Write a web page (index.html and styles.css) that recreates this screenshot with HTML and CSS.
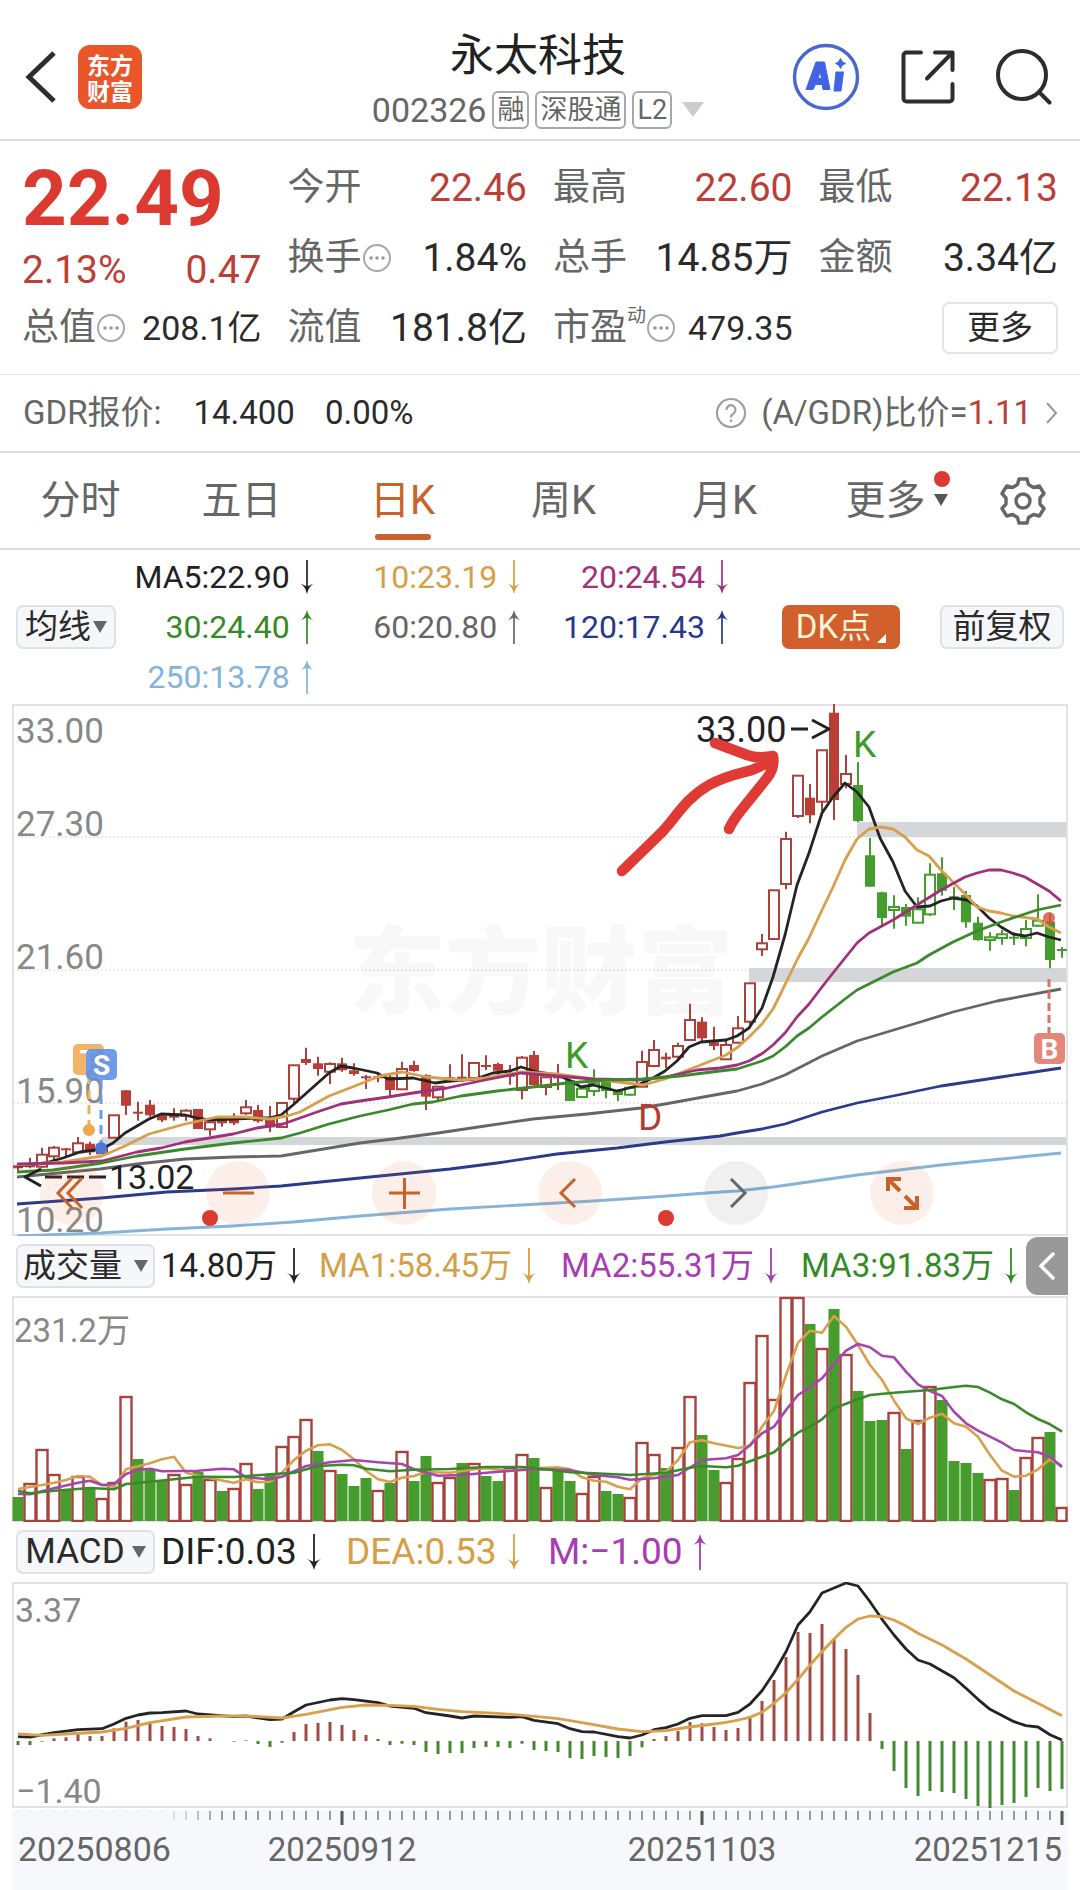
FILE: index.html
```html
<!DOCTYPE html>
<html lang="zh-CN">
<head>
<meta charset="utf-8">
<meta name="viewport" content="width=device-width, initial-scale=1">
<title>永太科技 002326</title>
<link rel="stylesheet" href="styles.css">
</head>
<body>
<svg class="defs" width="0" height="0" aria-hidden="true">
  <symbol id="i-down" viewBox="0 0 14 36"><path d="M7 0v32" fill="none" stroke="currentColor" stroke-width="1.8"/><path d="M0 25q5 3 7 11q2-8 7-11l-7 3z" fill="currentColor"/></symbol>
  <symbol id="i-up" viewBox="0 0 14 36"><path d="M7 36V4" fill="none" stroke="currentColor" stroke-width="1.8"/><path d="M0 11q5-3 7-11q2 8 7 11l-7-3z" fill="currentColor"/></symbol>
  <symbol id="i-info" viewBox="0 0 30 30"><circle cx="15" cy="15" r="13" fill="none" stroke="#a8a8a8" stroke-width="2"/><circle cx="9" cy="15" r="1.8" fill="#999"/><circle cx="15" cy="15" r="1.8" fill="#999"/><circle cx="21" cy="15" r="1.8" fill="#999"/></symbol>
</svg>

<header class="topbar">
  <div class="topbar-left">
    <button class="icon-btn" aria-label="返回"><svg width="34" height="54" viewBox="0 0 34 54"><path d="M30 3L5 27l25 24" fill="none" stroke="#2d2d2d" stroke-width="5"/></svg></button>
    <a class="logo" href="#"><span>东方</span><span>财富</span></a>
  </div>
  <div class="title">
    <h1>永太科技</h1>
    <div class="subtitle">
      <span class="code">002326</span>
      <span class="badge">融</span><span class="badge">深股通</span><span class="badge">L2</span>
      <svg class="caret" width="22" height="16" viewBox="0 0 22 16"><path d="M0 0h22L11 15z" fill="#ccc"/></svg>
    </div>
  </div>
  <div class="topbar-right">
    <button class="icon-btn" aria-label="AI">
      <svg width="68" height="68" viewBox="0 0 68 68"><circle cx="34" cy="34" r="31.5" fill="none" stroke="#4a67cf" stroke-width="3.4"/><path fill="#4163e6" fill-rule="evenodd" stroke="#4163e6" stroke-width="1" stroke-linejoin="round" d="M24 19h8.500l5.500 27.500h-7l-.800-5h-6.700l-2.500 5h-7zM26 35.500h3.300l-1-7.500zM44 29h7.500l-2.500 19h-7zM48.500 15.500q1 4 5 5q-4 1-5 5q-1-4-5-5q4-1 5-5z"/></svg>
    </button>
    <button class="icon-btn" aria-label="分享">
      <svg width="54" height="54" viewBox="0 0 54 54" fill="none" stroke="#2d2d2d" stroke-width="4" stroke-linecap="round" stroke-linejoin="round"><path d="M20 2.500H5.500a3 3 0 0 0-3 3v43a3 3 0 0 0 3 3h43a3 3 0 0 0 3-3V34M34 2.500h17.500V20M51 3L26 28.500"/></svg>
    </button>
    <button class="icon-btn" aria-label="搜索">
      <svg width="56" height="56" viewBox="0 0 56 56" fill="none" stroke="#2d2d2d" stroke-width="4" stroke-linecap="round"><circle cx="26" cy="26" r="24"/><path d="M43 43l10.500 10.500"/></svg>
    </button>
  </div>
</header>

<section class="quote">
  <div class="price-block">
    <div class="price">22.49</div>
    <div class="change"><span>2.13%</span><span>0.47</span></div>
  </div>
  <div class="cell"><span>今开</span><b class="red">22.46</b></div>
  <div class="cell"><span>最高</span><b class="red">22.60</b></div>
  <div class="cell"><span>最低</span><b class="red">22.13</b></div>
  <div class="cell"><span>换手<svg class="info"><use href="#i-info"/></svg></span><b>1.84%</b></div>
  <div class="cell"><span>总手</span><b>14.85万</b></div>
  <div class="cell"><span>金额</span><b>3.34亿</b></div>
  <div class="cell"><span>总值<svg class="info"><use href="#i-info"/></svg></span><b class="small">208.1亿</b></div>
  <div class="cell"><span>流值</span><b>181.8亿</b></div>
  <div class="cell"><span>市盈<sup>动</sup><svg class="info"><use href="#i-info"/></svg></span><b class="small">479.35</b></div>
  <div class="cell end"><button class="more-btn">更多</button></div>
</section>

<a class="gdr" href="#">
  <span>GDR报价:</span><span class="dark first">14.400</span><span class="dark second">0.00%</span>
  <span class="ratio">
    <svg width="32" height="32" viewBox="0 0 32 32" fill="none" stroke="#a0a0a0" stroke-width="2.200"><circle cx="16" cy="16" r="14"/><path d="M11.500 13a4.500 4.500 0 1 1 7 3.500c-2 1.200-2.500 2-2.500 4M16 22.500v2.500"/></svg>
    <span>(A/GDR)比价=<em>1.11</em></span>
    <svg width="12" height="22" viewBox="0 0 12 22" fill="none" stroke="#999" stroke-width="2"><path d="M1 1l9 10-9 10"/></svg>
  </span>
</a>

<nav class="tabs">
  <button class="tab">分时</button>
  <button class="tab">五日</button>
  <button class="tab active">日K</button>
  <button class="tab">周K</button>
  <button class="tab">月K</button>
  <button class="tab"><span class="with-dot">更多<i class="dot"></i><svg class="tri" width="14" height="12" viewBox="0 0 14 12"><path d="M0 0h14L7 12z" fill="#555"/></svg></span></button>
  <button class="tab gear" aria-label="设置">
    <svg width="48" height="48" viewBox="0 0 48 48" fill="none" stroke="#666" stroke-width="3.400" stroke-linejoin="round"><path d="M20 2h8l1.500 5.500 5 3 5.800-1.500 4.700 7.500-4 4.500v6l4 4.500-4.700 7.500-5.800-1.500-5 3L28 46h-8l-1.500-5.500-5-3L7.700 39 3 31.500 7 27v-6l-4-4.500L7.700 9l5.800 1.500 5-3z"/><circle cx="24" cy="24" r="7"/></svg>
  </button>
</nav>

<section class="ma">
  <button class="chip ma-chip">均线<svg width="14" height="14" viewBox="0 0 14 14"><path d="M0 1h14L7 13z" fill="#666"/></svg></button>
  <div class="ma-grid">
    <span class="c-black">MA5:22.90<svg class="arrow"><use href="#i-down"/></svg></span>
    <span class="c-gold">10:23.19<svg class="arrow"><use href="#i-down"/></svg></span>
    <span class="c-magenta">20:24.54<svg class="arrow"><use href="#i-down"/></svg></span>
    <span class="c-green">30:24.40<svg class="arrow"><use href="#i-up"/></svg></span>
    <span class="c-gray">60:20.80<svg class="arrow"><use href="#i-up"/></svg></span>
    <span class="c-navy">120:17.43<svg class="arrow"><use href="#i-up"/></svg></span>
    <span class="c-sky">250:13.78<svg class="arrow"><use href="#i-up"/></svg></span>
  </div>
  <button class="chip dk">DK点<svg width="9" height="9" viewBox="0 0 9 9"><path d="M9 0v9H0z" fill="#fff"/></svg></button>
  <button class="chip fq">前复权</button>
</section>

<section class="chart">
  <svg id="kline" viewBox="12 704 1056 532" role="img" aria-label="日K线"></svg>
  <div class="chart-tools">
    <button aria-label="最早"><svg viewBox="0 0 64 64"><path d="M32 17L18 32l14 15M42 17L28 32l14 15"/></svg></button>
    <button aria-label="缩小"><svg viewBox="0 0 64 64"><path d="M17 32h31"/></svg></button>
    <button aria-label="放大"><svg viewBox="0 0 64 64"><path d="M17 32h31M32.500 17v31"/></svg></button>
    <button aria-label="左移"><svg viewBox="0 0 64 64"><path d="M37 18L23 32l14 14"/></svg></button>
    <button class="off" aria-label="右移"><svg viewBox="0 0 64 64"><path d="M27 18l14 14-14 14"/></svg></button>
    <button class="full" aria-label="全屏"><svg viewBox="0 0 64 64"><path d="M18 30V18h13M18 18l12 12M47 35v12H34M47 47L35 35"/></svg></button>
  </div>
</section>

<section class="legend vol">
  <button class="chip sel">成交量<svg width="14" height="12" viewBox="0 0 14 12"><path d="M0 0h14L7 12z" fill="#666"/></svg></button>
  <div class="legend-items">
    <span class="c-black">14.80万<svg class="arrow"><use href="#i-down"/></svg></span>
    <span class="c-gold">MA1:58.45万<svg class="arrow"><use href="#i-down"/></svg></span>
    <span class="c-purple">MA2:55.31万<svg class="arrow"><use href="#i-down"/></svg></span>
    <span class="c-green">MA3:91.83万<svg class="arrow"><use href="#i-down"/></svg></span>
  </div>
  <button class="drawer" aria-label="展开"><svg width="18" height="28" viewBox="0 0 18 28"><path d="M15 2L3 14l12 12" fill="none" stroke="#fff" stroke-width="3.500" stroke-linecap="round"/></svg></button>
</section>
<section class="chart"><svg id="volume" viewBox="12 1296 1056 226" role="img" aria-label="成交量"></svg></section>

<section class="legend macd">
  <button class="chip sel">MACD<svg width="14" height="12" viewBox="0 0 14 12"><path d="M0 0h14L7 12z" fill="#666"/></svg></button>
  <div class="legend-items">
    <span class="c-black">DIF:0.03<svg class="arrow"><use href="#i-down"/></svg></span>
    <span class="c-gold">DEA:0.53<svg class="arrow"><use href="#i-down"/></svg></span>
    <span class="c-purple">M:−1.00<svg class="arrow"><use href="#i-up"/></svg></span>
  </div>
</section>
<section class="chart"><svg id="macd" viewBox="12 1582 1056 226" role="img" aria-label="MACD"></svg></section>
<section class="chart axis"><svg id="axis" viewBox="12 1810 1056 80" role="img" aria-label="日期"></svg></section>

<script src="charts.js"></script>
</body>
</html>
```
FILE: styles.css
```css
* { box-sizing: border-box; }
body { margin: 0; background: #fff; color: #2b2b2b; font-family: Roboto, "Noto Sans CJK SC", sans-serif; line-height: 1.2; }
button { margin: 0; padding: 0; border: 0; background: none; font: inherit; color: inherit; cursor: pointer; }
a { color: inherit; text-decoration: none; }
svg { display: block; flex: none; }
.defs { position: absolute; }

.topbar { display: grid; grid-template-columns: 1fr auto 1fr; height: 141px; padding: 24px 28px 0 24px; border-bottom: 2px solid #dcdcdc; }
.topbar-left, .topbar-right { display: flex; align-items: center; height: 106px; }
.topbar-left { gap: 20px; }
.topbar-right { justify-content: flex-end; gap: 41px; }
.logo { display: flex; flex-direction: column; justify-content: center; align-items: center; width: 64px; height: 64px; border-radius: 12px; background: #e8562a; color: #fff; font: 700 23px/26px "Noto Sans CJK SC", sans-serif; }
.title { text-align: center; }
h1 { margin: 0; font-size: 44px; line-height: 64px; font-weight: 400; color: #222; }
.subtitle { display: flex; align-items: center; gap: 6px; height: 44px; color: #666; }
.code { font-size: 34px; }
.badge { height: 38px; padding: 0 3px; border: 2px solid #a8a8a8; border-radius: 6px; font-size: 27px; line-height: 34px; }
.caret { margin-left: 4px; }

.quote { display: grid; grid-template-columns: repeat(4, minmax(0, 1fr)); grid-auto-rows: 70px; column-gap: 26px; padding: 12px 22px 11px; border-bottom: 1px solid #e6e6e6; }
.price-block { grid-row: span 2; color: #b93f38; }
.price { font-size: 78px; line-height: 92px; font-weight: 700; color: #dc3a30; }
.change { display: flex; justify-content: space-between; font-size: 39px; line-height: 50px; }
.cell { display: flex; align-items: center; justify-content: space-between; font-size: 39px; white-space: nowrap; }
.cell > span { display: flex; align-items: center; font-size: 37px; color: #666; }
.cell b { font-weight: 400; }
.cell b.small { font-size: 34px; }
.cell .red { color: #b93f38; }
.cell sup { align-self: flex-start; font-size: 19px; line-height: 20px; }
.cell.end { justify-content: flex-end; }
.info { width: 30px; height: 30px; }
.more-btn { width: 116px; height: 52px; border: 2px solid #e4e4e4; border-radius: 7px; font-size: 33px; }

.gdr { display: flex; align-items: center; height: 78px; padding: 0 22px 0 23px; border-bottom: 2px solid #dcdcdc; color: #666; font-size: 33px; }
.gdr .dark { color: #2b2b2b; }
.gdr .first { margin-left: 32px; }
.gdr .second { margin-left: 30px; }
.ratio { display: flex; align-items: center; gap: 14px; margin-left: auto; }
.ratio em { font-style: normal; color: #b93f38; }

.tabs { display: grid; grid-template-columns: repeat(6, 161fr) 114fr; height: 97px; border-bottom: 2px solid #dcdcdc; }
.tab { display: flex; flex-direction: column; align-items: center; justify-content: center; font-size: 40px; color: #666; }
.tab.active { color: #c8622d; }
.tab.active::after { content: ""; width: 56px; height: 6px; margin: 9px 0 -15px; border-radius: 3px; background: #c8622d; }
.with-dot { position: relative; }
.dot { position: absolute; right: -24px; top: -6px; width: 16px; height: 16px; border-radius: 50%; background: #dc3a30; }
.tri { position: absolute; right: -22px; top: 17px; }

.ma { display: flex; align-items: center; height: 154px; padding: 0 16px; }
.chip { display: flex; align-items: center; justify-content: center; height: 44px; border: 2px solid #e0e1e4; border-radius: 7px; background: #f6f7fa; font-size: 33px; white-space: nowrap; }
.ma-chip { width: 100px; gap: 2px; }
.ma-grid { flex: 1; display: grid; grid-template-columns: 198fr 208fr 208fr; grid-auto-rows: 50px; font-size: 32px; }
.ma-grid span { display: flex; align-items: center; justify-content: flex-end; gap: 10px; }
.arrow { width: 14px; height: 34px; }
.dk { width: 118px; margin-left: 53px; border: 0; background: #d1602c; color: #fff4dc; gap: 6px; }
.dk svg { align-self: flex-end; margin-bottom: 6px; }
.fq { width: 124px; margin-left: 40px; }

.c-black { color: #222; }
.c-gold { color: #d69e45; }
.c-magenta { color: #a3307c; }
.c-green { color: #358a28; }
.c-gray { color: #666; }
.c-navy { color: #26388c; }
.c-sky { color: #82b4dc; }
.c-purple { color: #a83cb4; }

.chart { position: relative; margin: 0 12px; }
.chart > svg { width: 100%; height: auto; }
.chart text { font-family: Roboto, "Noto Sans CJK SC", sans-serif; }
.chart-tools { position: absolute; left: 28px; right: 134px; bottom: 11px; display: flex; justify-content: space-between; }
.chart-tools button { width: 64px; height: 64px; border-radius: 50%; background: rgba(225, 95, 35, .1); color: #c8622d; }
.chart-tools .off { background: rgba(90, 90, 90, .09); color: #666; }
.chart-tools path { fill: none; stroke: currentColor; stroke-width: 3; }
.chart-tools .full path { stroke-width: 4; }

.legend { display: flex; align-items: center; height: 60px; padding: 0 12px 0 16px; font-size: 33px; }
.sel { width: 139px; gap: 12px; }
.legend-items { flex: 1; display: grid; margin-left: 6px; }
.legend-items span { display: flex; align-items: center; gap: 10px; white-space: nowrap; }
.legend .arrow { height: 36px; }
.vol .legend-items { grid-template-columns: 158fr 242fr 240fr 225fr; }
.macd .legend-items { grid-template-columns: 185fr 202fr 520fr; font-size: 37px; }
.macd .sel { font-size: 35px; gap: 7px; }
.drawer { display: flex; align-items: center; justify-content: center; width: 42px; height: 58px; border-radius: 12px 0 0 12px; background: #999; }
.axis { margin-top: 2px; background: #f7f8fb; }
```
FILE: charts.js
```js
const RED = '#a8423c', FILL_RED = '#bb3d35', GREEN = '#469c2c';
const COLORS = { black: '#242424', gold: '#d8a04c', magenta: '#a0307a', green: '#3a8a2c', gray: '#666', navy: '#2a3a8c', sky: '#86b4d8', purple: '#a546ad' };
const xOf = i => 18 + 12 * i;

const line = (pts, color, w = 3) => `<polyline points="${pts}" fill="none" stroke="${color}" stroke-width="${w}" stroke-linejoin="round"/>`;
const rect = (x, y, w, h, fill, extra = '') => `<rect x="${x}" y="${y}" width="${w}" height="${h}" fill="${fill}" ${extra}/>`;
const text = (x, y, s, fill, size = 34, extra = '') => `<text x="${x}" y="${y}" fill="${fill}" font-size="${size}" ${extra}>${s}</text>`;
const seg = (x1, y1, x2, y2, color, w = 2, extra = '') => `<line x1="${x1}" y1="${y1}" x2="${x2}" y2="${y2}" stroke="${color}" stroke-width="${w}" ${extra}/>`;
const frame = (y, h) => rect(13, y + 1, 1054, h - 2, 'none', 'stroke="#e2e2e2" stroke-width="2"');

/* Candles: kind, high, body top, body bottom, low, in thirds of a unit below base.
   h/n hollow up bars, f/g filled down bars, c/k crosses (red / green). */
const candles = [
  [990, 'f 522 526 535 542|f 503 525 532 535|h 473 494 530 535|h 468 473 499 510|c 474 478 478 500|h 441 460 487 492|f 455 461 487 495|h 460 467 490 492|h 375 376 443 443|f 300 301 347 375|c 335 368 368 392|f 330 344 376 380|f 370 376 391 396|f 355 374 383 392|h 358 362 377 392|f 357 357 417 417|h 395 397 418 437|f 385 390 400 410|f 370 385 400 405|h 330 352 370 375|f 345 360 394 398|f 348 388 412 426|h 338 339 411 412|h 226 226 326 345|f 173 207 219 225|f 200 220 237 257|h 217 222 245 282|f 203 220 241 245|f 220 241 252 257|c 255 262 262 297|c 247 262 262 277|f 255 260 300 318|h 215 237 298 300|f 212 225 243 245|f 253 255 320 360|h 288 290 322 330|f 223 262 275 278|f 193 260 272 275|h 218 219 264 264|c 196 228 228 240|f 218 222 242 258|f 225 250 260 284|h 198 203 300 328|f 183 195 285 287|h 260 262 291 316|c 222 262 262 300|g 268 270 333 333|n 292 296 321 325|n 238 280 303 318|g 265 275 303 325|g 298 300 315 333|n 288 293 314 318|h 182 216 290 292|h 150 180 228 232|f 188 200 208 234|h 158 168 200 205|h 41 90 150 152|f 82 95 145 157|f 110 157 168 180'],
  [960, 'h 240 255 298 298|h 168 205 248 250|h 68 70 185 205'],
  [700, 'h 702 730 748 768|h 570 571 717 717|h 395 417 552 568|h 226 227 348 354|f 252 293 346 370|h 150 151 305 335|f 12 38 300 360|h 165 222 252 265|g 186 255 363 366|g 414 466 560 560|g 575 577 654 675|n 586 621 630 686|g 612 621 650 677|n 592 628 668 670|n 490 524 643 648|g 472 520 572 587|k 560 592 592 630|g 573 585 667 683|g 650 668 720 722|n 697 712 720 752|n 690 703 714 734|k 697 713 713 735|n 660 687 714 739|n 583 662 677 680|g 640 665 780 805|k 741 750 750 773']
].flatMap(([base, rows]) => rows.split('|').map(r => {
  const [kind, ...v] = r.split(' ');
  return [kind, ...v.map(n => +(base + n / 3).toFixed(1))];
}));

const drawCandle = ([kind, hi, top, bot, lo], i) => {
  const x = xOf(i), up = 'hfc'.includes(kind), col = up ? RED : GREEN;
  if (kind === 'c' || kind === 'k') return seg(x, hi, x, lo, col) + seg(x - 5, top, x + 5, top, col);
  if (kind === 'h' || kind === 'n')
    return seg(x, hi, x, top, col) + seg(x, bot, x, lo, col) + rect(x - 5, top, 10, Math.max(bot - top, 1), '#fff', `fill-opacity=".6" stroke="${col}" stroke-width="2"`);
  return seg(x, hi, x, lo, col) + rect(x - 5, top, 10, Math.max(bot - top, 2), up ? FILL_RED : GREEN);
};

const averages = {
  sky: '17,1236 101,1233 167,1229 233,1226 293,1222 360,1216 450,1209 521,1205 593,1201 653,1197 720,1192 737,1191 773,1187 822,1180 857,1175 941,1165 1001,1159 1061,1153',
  navy: '17,1204 101,1198 167,1192 233,1189 281,1186 360,1178 450,1169 497,1163 557,1154 617,1148 665,1142 720,1136 737,1133 762,1129 785,1124 822,1112 857,1103 893,1096 941,1086 1001,1077 1061,1068',
  gray: '17,1177 100,1169 137,1164 185,1159 233,1157 281,1156 360,1143 393,1139 438,1133 485,1126 533,1119 587,1114 641,1108 665,1104 720,1094 737,1091 762,1084 785,1075 822,1056 857,1041 917,1023 953,1012 997,1001 1061,989',
  black: '17,1166 45,1163 63,1158 80,1152 102,1149 113,1143 125,1133 137,1126 149,1119 161,1114 185,1115 197,1118 209,1120 233,1119 257,1118 269,1118 281,1115 293,1105 329,1073 341,1066 353,1068 363,1070 377,1073 388,1079 413,1078 435,1083 450,1081 475,1079 493,1073 510,1071 521,1067 537,1072 557,1075 569,1080 581,1087 593,1085 617,1091 633,1087 653,1078 665,1071 677,1061 689,1047 701,1042 726,1040 737,1036 749,1028 762,1008 773,977 785,935 797,885 809,853 822,813 833,797 845,783 857,792 869,807 880,838 893,862 905,891 917,907 930,906 941,901 953,898 967,900 977,906 989,918 1001,927 1013,934 1025,936 1037,933 1049,937 1061,940',
  gold: '17,1165 63,1162 102,1156 125,1146 149,1134 185,1124 217,1117 245,1117 270,1119 287,1116 300,1112 329,1096 360,1084 380,1076 402,1072 427,1077 460,1080 485,1078 521,1072 557,1074 593,1079 643,1085 665,1079 693,1068 726,1055 738,1047 749,1037 762,1024 773,1009 780,995 797,960 809,938 822,910 833,887 845,860 857,839 869,829 881,827 893,829 905,837 917,850 929,856 941,870 953,882 965,894 977,907 989,911 1001,913 1013,916 1037,919 1049,927 1061,933',
  magenta: '17,1164 63,1163 102,1161 137,1152 161,1148 185,1142 233,1134 257,1128 283,1124 317,1112 341,1104 360,1101 388,1097 413,1093 447,1088 485,1080 521,1073 557,1076 593,1079 637,1080 665,1077 697,1070 720,1068 737,1065 749,1061 763,1053 773,1045 785,1033 797,1017 809,1004 822,987 833,973 845,958 857,943 869,933 893,920 917,905 941,890 965,877 977,873 989,870 1001,870 1013,873 1025,877 1037,884 1049,891 1061,901',
  green: '17,1172 53,1170 102,1163 137,1156 185,1149 233,1143 281,1138 300,1133 329,1124 360,1116 388,1110 413,1104 433,1102 461,1096 497,1091 533,1087 567,1083 607,1080 643,1079 680,1076 720,1071 737,1069 762,1061 773,1056 785,1047 797,1036 809,1028 822,1017 845,999 857,990 881,978 893,972 917,963 929,955 953,942 977,931 1001,922 1025,914 1037,910 1061,905'
};

const marker = (x, y, fill, letter, opacity = .92) => rect(x, y, 31, 31, fill, `rx="5" fill-opacity="${opacity}"`) + text(x + 15.5, y + 26, letter, '#fff', 28, 'font-weight="700" text-anchor="middle"');

document.getElementById('kline').innerHTML =
  text(541, 1006, '东方财富', '#f8f8f8', 96, 'font-weight="900" text-anchor="middle"') +
  [837, 970, 1103].map(y => seg(13, y, 1067, y, '#d4d4d4', 1, 'stroke-dasharray="2 2"')).join('') +
  rect(857, 822, 210, 15, '#d5d6da') + rect(749, 968, 318, 14, '#d5d6da') + rect(101, 1137, 966, 8, '#d5d6da') +
  frame(704, 532) +
  [[743, '33.00'], [836, '27.30'], [969, '21.60'], [1103, '15.90'], [1232, '10.20']].map(([y, s]) => text(16, y, s, '#888', 35)).join('') +
  candles.map(drawCandle).join('') +
  Object.entries(averages).map(([k, p]) => line(p, COLORS[k], 2.8)).join('') +
  seg(89, 1075, 89, 1126, '#eab163', 3, 'stroke-dasharray="9 6"') + seg(101, 1080, 101, 1142, '#6b9ae8', 3, 'stroke-dasharray="9 6"') +
  '<circle cx="89" cy="1130" r="6" fill="#eda950"/><circle cx="101" cy="1148" r="6" fill="#4c78d8"/>' +
  marker(73, 1044, '#f0ae5c', 'T') + marker(86, 1049, '#5a8ee8', 'S', .88) +
  seg(1049, 979, 1049, 1034, '#d0766c', 3, 'stroke-dasharray="8 4"') + marker(1034, 1033, '#e27d70', 'B') +
  '<circle cx="1049" cy="918" r="6" fill="#dc4a3c" fill-opacity=".8"/>' +
  text(565, 1068, 'K', '#3f9a2a', 37) + text(853, 757, 'K', '#3f9a2a', 37) + text(638, 1130, 'D', '#b03c36', 37) +
  text(696, 742, '33.00', '#222', 36) + seg(791, 729, 808, 729, '#222', 3) + line('812,720 829,729 812,738', '#222') +
  text(109, 1189, '13.02', '#222', 34) + line('41,1169 25,1177 41,1186', '#222') + seg(45, 1177, 107, 1177, '#222', 3, 'stroke-dasharray="17 5"') +
  '<path d="M622 871L659 835C675 820 683 800 709 785C727 775 742 773 752 770L770 762M715 743L747 755Q757 759 773 756Q775 768 767 778L743 808Q733 820 729 829" fill="none" stroke="#e03a36" stroke-width="10.500" stroke-linecap="round" stroke-linejoin="round"/>' +
  '<circle cx="210" cy="1218" r="8" fill="#dc3a30"/><circle cx="666" cy="1218" r="8" fill="#dc3a30"/>';

/* Turns "index value" pairs into polyline points. */
const series = (s, base) => s.split(',').map(p => { const [i, v] = p.trim().split(' '); return `${xOf(+i)},${(base + v / 3).toFixed(1)}`; }).join(' ');

/* Volume bars: r up, g down. */
const volumes = 'g801 r758 r658 r732 g778 r738 g778 r803 r757 r497 g688 g718 g752 r732 r762 g727 r748 g782 r775 r698 g777 g732 r648 r617 r567 g663 r720 g732 g768 g744 r780 g758 r662 g753 g678 r757 r742 g700 r698 g738 g753 r712 r671 g685 r772 g722 g752 r788 r737 g782 g792 r800 r635 r671 g714 r650 r497 g616 g720 r757 r683 r455 r314 r507 r200 r200 g282 r353 g238 r372 g483 g574 g571 r547 g657 r569 r468 g510 g693 g699 g729 r748 r743 g780 r681 r622 g605 r831'.split(' ');

document.getElementById('volume').innerHTML =
  frame(1296, 226) +
  volumes.map((s, i) => {
    const y = Math.round(1230 + s.slice(1) / 3);
    return s[0] === 'g' ? rect(xOf(i) - 5.5, y, 11, 1521 - y, GREEN)
      : rect(xOf(i) - 5.5, y + 1, i === 87 ? 10 : 11, 1520 - y, '#fff', `stroke="${RED}" stroke-width="2.4"`);
  }).join('') +
  line(series('0 777,2 765,3 758,4 750,5 738,6 740,7 765,8 770,9 718,11 700,12 688,13 680,14 728,16 745,18 758,19 748,20 757,21 755,22 728,23 690,24 662,25 646,26 643,27 660,28 688,29 722,30 748,31 756,32 743,33 738,34 726,36 728,38 718,39 715,41 722,43 715,45 712,46 718,47 742,48 752,49 755,50 770,51 778,52 745,54 725,55 690,56 637,57 631,58 640,60 654,61 648,62 590,63 543,64 435,65 338,66 302,67 308,68 258,69 290,70 345,71 405,72 450,73 512,74 565,75 582,76 563,77 551,78 580,79 590,80 620,81 675,82 722,83 740,84 737,85 718,86 688,87 708', 1230), COLORS.gold, 2.6) +
  line(series('0 792,1 793,3 775,5 758,6 752,7 765,8 762,9 732,10 720,11 716,12 724,15 722,17 716,18 718,19 742,21 748,22 740,24 708,26 697,28 690,30 697,32 702,33 718,35 737,37 735,40 725,42 720,44 718,46 720,48 735,50 742,51 749,53 745,55 735,57 690,59 685,60 675,61 645,62 610,63 590,64 540,65 495,66 472,67 445,68 402,69 362,70 342,71 352,72 377,73 382,74 425,75 463,76 483,77 498,78 545,79 580,80 602,82 638,83 660,84 664,85 667,86 680,87 711', 1230), COLORS.purple, 2.6) +
  line(series('0 783,1 790,3 782,6 774,8 778,9 762,11 755,13 748,15 740,18 741,21 733,23 728,25 708,27 704,28 706,29 716,31 724,33 719,36 717,39 711,42 711,44 718,46 727,48 730,51 735,54 728,56 713,57 708,59 712,60 707,62 680,63 667,64 635,65 608,66 590,67 568,68 535,70 508,71 495,73 488,76 480,78 471,79 467,80 471,81 488,82 508,83 522,84 547,85 567,86 583,87 605', 1230), COLORS.green, 2.6) +
  text(14, 1342, '231.2万', '#888', 33);

/* MACD histogram ends; the zero level is 663. */
const hist = '675 675 665 655 652 643 648 648 625 605 600 607 618 621 627 648 655 663 665 661 672 681 668 636 612 609 606 615 630 645 657 675 671 675 696 702 699 699 684 681 681 684 671 690 693 696 714 717 708 711 714 708 682 657 648 633 606 610 621 630 624 588 543 480 411 336 339 312 358 387 465 579 687 753 804 828 813 816 819 837 858 864 855 849 831 804 813 807'.split(' ').map(Number);

document.getElementById('macd').innerHTML =
  frame(1582, 226) +
  hist.map((v, i) => seg(xOf(i), 1741, xOf(i), (1520 + v / 3).toFixed(1), v < 663 ? '#a04a42' : '#43882f', 3)).join('') +
  line(series('0 650,1 651,3 638,5 629,7 626,8 612,9 595,10 585,11 579,12 578,14 573,15 582,18 590,19 588,21 599,22 597,23 575,24 555,26 540,27 536,28 539,30 548,31 558,33 565,34 578,36 588,37 594,38 588,41 592,42 590,43 601,45 611,46 626,47 635,48 636,50 650,51 654,52 645,53 629,54 623,55 612,56 595,57 587,59 587,60 577,61 552,62 512,63 458,64 395,65 315,66 275,67 219,68 204,69 189,70 198,71 245,72 298,73 345,74 387,75 420,76 432,78 473,79 505,80 538,81 568,83 605,84 617,85 621,86 644,87 660', 1520), COLORS.black, 2.8) +
  line(series('0 642,2 646,4 642,7 636,9 625,11 608,14 591,17 588,19 588,22 594,24 583,27 562,29 555,31 556,33 559,35 568,37 575,40 580,44 592,45 596,47 608,50 627,52 635,54 632,56 621,58 612,59 607,60 600,61 592,62 577,63 550,64 518,65 478,66 435,67 395,68 357,69 322,70 297,71 288,72 290,73 300,74 318,75 340,77 375,79 417,81 465,83 513,85 550,87 587', 1520), COLORS.gold, 2.8) +
  text(15, 1622, '3.37', '#888') + text(16, 1803, '−1.40', '#888');

let ticks = '';
for (let i = 0; i < 88; i++) {
  const major = [27, 57, 87].includes(i);
  const fade = Math.min(1, Math.max(.25, (i - 12) / 5));
  ticks += seg(xOf(i), 1811, xOf(i), major ? 1825 : i < 13 ? 1812 : 1820, major ? '#555' : '#999', major ? 3 : 2, `stroke-opacity="${fade}"`);
}
document.getElementById('axis').innerHTML = ticks +
  text(18, 1861, '20250806', '#666') + text(342, 1861, '20250912', '#666', 33, 'text-anchor="middle"') +
  text(702, 1861, '20251103', '#666', 33, 'text-anchor="middle"') + text(1062, 1861, '20251215', '#666', 33, 'text-anchor="end"');
```
